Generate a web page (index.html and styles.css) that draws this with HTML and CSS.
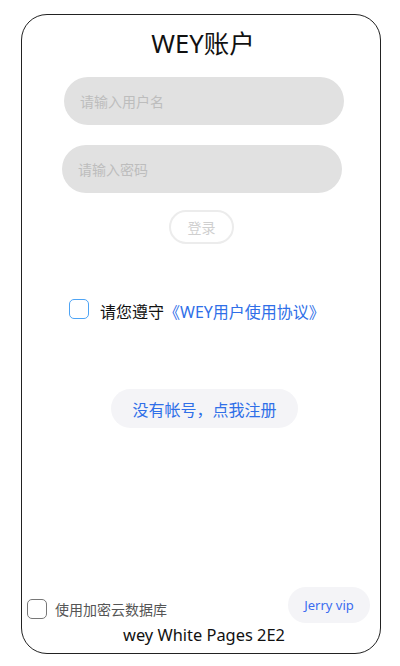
FILE: index.html
```html
<!DOCTYPE html>
<html lang="zh-CN">
<head>
    <meta charset="UTF-8">
    <meta name="viewport" content="width=device-width, initial-scale=1.0">
    <title>WEY账户</title>
    <link rel="stylesheet" href="styles.css">
</head>
<body>

<div class="card">
    <h1 class="title">WEY账户</h1>

    <input class="field field-user" type="text" placeholder="请输入用户名">
    <input class="field field-pass" type="password" placeholder="请输入密码">

    <button class="login-btn">登录</button>

    <label class="agree">
        <span class="box box-blue"></span>
        <span class="agree-text">请您遵守<a href="#" class="agree-link">《WEY用户使用协议》</a></span>
    </label>

    <button class="register-btn">没有帐号，点我注册</button>

    <div class="bottom">
        <div class="bottom-row">
            <label class="cloud">
                <span class="box box-gray"></span>
                <span class="cloud-text">使用加密云数据库</span>
            </label>
            <button class="vip-btn">Jerry vip</button>
        </div>
        <div class="footer">wey White Pages 2E2</div>
    </div>
</div>

</body>
</html>
```

FILE: styles.css
```css
body {
    margin: 0;
    padding: 0;
    background-color: #fff;
    font-family: "Noto Sans", "Noto Sans CJK SC", sans-serif;
}
.card {
    box-sizing: border-box;
    width: 360px;
    height: 640px;
    margin: 14px 0 0 21px;
    border: 1px solid #222;
    border-radius: 26px;
    display: flex;
    flex-direction: column;
}
.title {
    margin: 12px 0 0;
    font-size: 25.5px;
    font-weight: normal;
    line-height: 33px;
    text-align: center;
    color: #111;
    padding-left: 4px;
}
.field {
    box-sizing: border-box;
    width: 280px;
    height: 48px;
    border: none;
    border-radius: 24px;
    background-color: #e1e1e1;
    padding: 0 16px;
    font-family: inherit;
    font-size: 14px;
    color: #333;
    outline: none;
}
.field::placeholder {
    color: #bdbdbd;
}
.field-user {
    margin: 17px 0 0 42px;
}
.field-pass {
    margin: 20px 0 0 40px;
}
.login-btn {
    box-sizing: border-box;
    width: 65px;
    height: 34px;
    margin: 17px 0 0 147px;
    border: 2px solid #ececec;
    border-radius: 17px;
    background: #fff;
    color: #cfcfcf;
    font-family: inherit;
    font-size: 14px;
    padding: 0;
}
.agree {
    display: flex;
    align-items: center;
    margin: 53px 0 0 47px;
    height: 24px;
}
.box {
    box-sizing: border-box;
    width: 20px;
    height: 20px;
    border-radius: 5px;
    background: #fff;
    flex-shrink: 0;
}
.box-blue {
    border: 1.5px solid #4ea4f5;
}
.box-gray {
    border: 1.5px solid #777;
}
.agree-text {
    margin-left: 11px;
    font-size: 16px;
    color: #111;
    padding-top: 3px;
}
.agree-link {
    color: #2f6fe8;
    text-decoration: none;
}
.register-btn {
    box-sizing: border-box;
    width: 187px;
    height: 39px;
    margin: 68px 0 0 89px;
    border: none;
    border-radius: 20px;
    background-color: #f4f4f7;
    color: #2f6fe8;
    font-family: inherit;
    font-size: 16px;
    padding: 0;
}
.bottom {
    margin-top: auto;
    padding-bottom: 8px;
}
.bottom-row {
    display: flex;
    justify-content: space-between;
    align-items: center;
    padding: 0 10px 0 5px;
}
.cloud {
    display: flex;
    align-items: center;
    margin-top: 8px;
}
.cloud-text {
    margin-left: 8px;
    font-size: 14px;
    color: #555;
}
.vip-btn {
    box-sizing: border-box;
    width: 82px;
    height: 36px;
    border: none;
    border-radius: 18px;
    background-color: #f4f4f7;
    color: #3a6cf0;
    font-family: inherit;
    font-size: 13px;
    padding: 0;
}
.footer {
    margin-top: 2px;
    text-align: center;
    font-size: 16.4px;
    line-height: 20px;
    color: #111;
    padding-left: 6px;
}
```
